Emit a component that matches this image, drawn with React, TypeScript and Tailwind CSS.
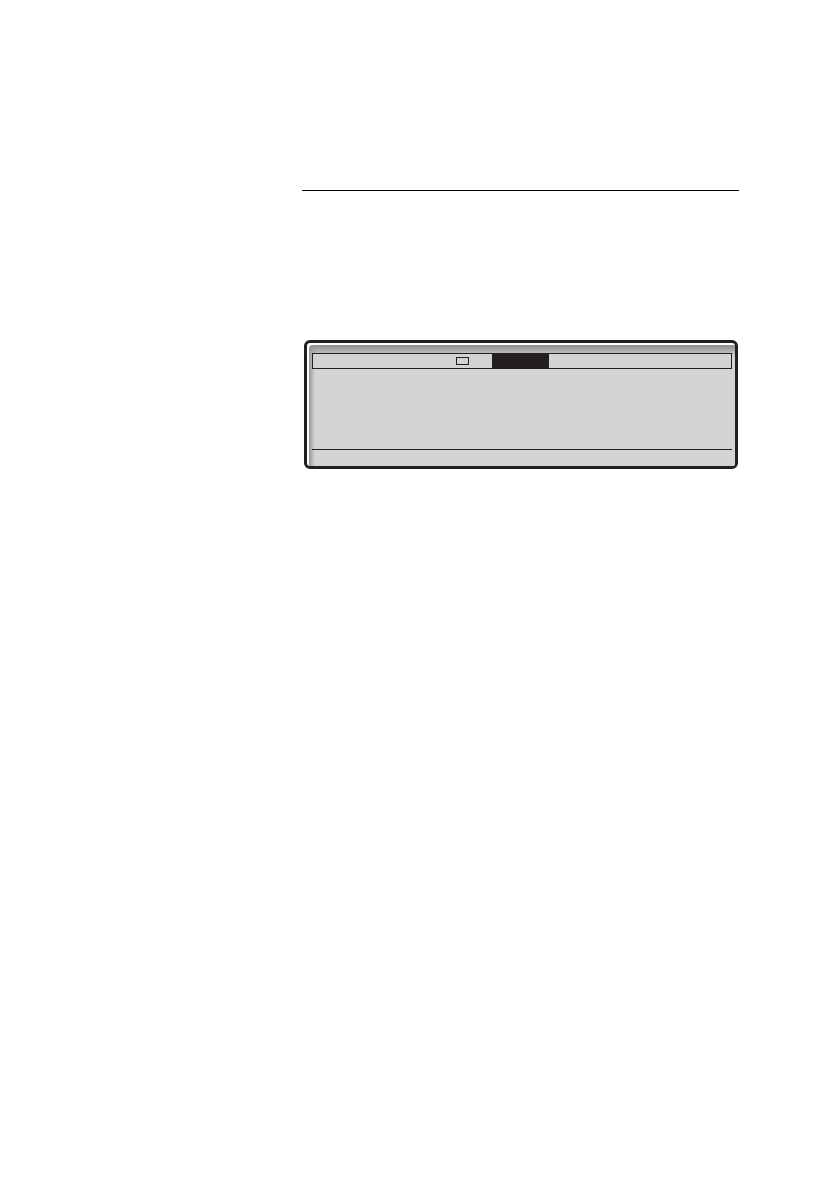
import type { ReactNode } from 'react';

interface DisplayFrameProps {
  children: ReactNode;
}

function DisplayFrame({ children }: DisplayFrameProps) {
  return (
    <div className="rounded-md border-3 border-[#231f20] bg-white pt-0.5 pl-0.5">
      {/* bevel shadow along the top and left edges */}
      <div className="rounded-tl-sm rounded-br-xs bg-[#d1d3d4] bg-linear-to-b from-[#8d8d8f] to-transparent bg-[length:100%_12px] bg-no-repeat">
        <div className="rounded-tl-sm bg-linear-to-r from-[#98989a] to-transparent bg-[length:6px_100%] bg-no-repeat px-[3px] pt-2">
          {children}
        </div>
      </div>
    </div>
  );
}

function MenuBar() {
  return (
    <div className="flex h-4 border border-[#231f20] bg-[#d1d3d4]">
      <div className="flex w-[179px] items-center justify-end pr-[23px]">
        <span className="h-2 w-[13px] border border-[#231f20]" />
      </div>
      <div className="w-[57px] bg-[#231f20]" />
    </div>
  );
}

export default function App() {
  return (
    <main className="min-h-screen bg-white pt-[190px] pr-[101px] pl-[302px]">
      <hr className="border-t border-black" />
      <section className="mt-[149px] mr-px ml-0.5">
        <DisplayFrame>
          <MenuBar />
          <div className="h-20" />
          <div className="h-[17px] border-t border-[#231f20]" />
        </DisplayFrame>
      </section>
    </main>
  );
}
